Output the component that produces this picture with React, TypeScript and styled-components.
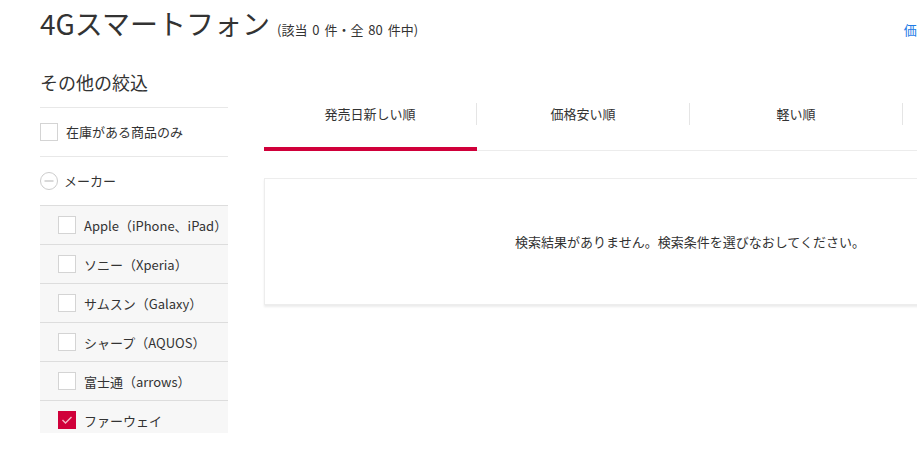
import styled, { createGlobalStyle } from "styled-components";

const GlobalStyle = createGlobalStyle`
  html, body {
    margin: 0;
    padding: 0;
    background: #fff;
    overflow: hidden;
  }
  body {
    font-family: "Noto Sans CJK JP", "Noto Sans", sans-serif;
    color: #333;
  }
`;

const makers = [
  { label: "Apple（iPhone、iPad）", checked: false },
  { label: "ソニー（Xperia）", checked: false },
  { label: "サムスン（Galaxy）", checked: false },
  { label: "シャープ（AQUOS）", checked: false },
  { label: "富士通（arrows）", checked: false },
  { label: "ファーウェイ", checked: true },
  { label: "LG", checked: false },
];

const tabs = ["発売日新しい順", "価格安い順", "軽い順", "人気順"];

const MinusCircle = () => (
  <svg width="18" height="18" viewBox="0 0 18 18">
    <circle cx="9" cy="9" r="8.5" fill="#fff" stroke="#ccc" />
    <line x1="4.5" y1="9" x2="13.5" y2="9" stroke="#ccc" strokeWidth="1.5" />
  </svg>
);

const App: React.FC = () => {
  return (
    <>
      <GlobalStyle />
      <Page>
        <Header>
          <TitleGroup>
            <Title>4Gスマートフォン</Title>
            <Count>(該当 0 件・全 80 件中)</Count>
          </TitleGroup>
          <HeaderLink>価格・お支払い方法についてはこちら</HeaderLink>
        </Header>
        <Columns>
          <Sidebar>
            <SideHeading>その他の絞込</SideHeading>
            <FilterRow>
              <Box />
              <span>在庫がある商品のみ</span>
            </FilterRow>
            <FilterRow>
              <MinusCircle />
              <MakerLabel>メーカー</MakerLabel>
            </FilterRow>
            <MakerList>
              {makers.map((m) => (
                <MakerRow key={m.label}>
                  <Box checked={m.checked}>
                    {m.checked && (
                      <svg width="12" height="10" viewBox="0 0 12 10">
                        <polyline
                          points="1.5,5 4.5,8 10.5,2"
                          fill="none"
                          stroke="#f4b7c6"
                          strokeWidth="1.4"
                        />
                      </svg>
                    )}
                  </Box>
                  <span>{m.label}</span>
                </MakerRow>
              ))}
            </MakerList>
          </Sidebar>
          <Main>
            <TabBar>
              {tabs.map((t, i) => (
                <Tab key={t} active={i === 0}>
                  <TabLabel last={i === tabs.length - 1}>{t}</TabLabel>
                </Tab>
              ))}
            </TabBar>
            <EmptyBox>検索結果がありません。検索条件を選びなおしてください。</EmptyBox>
          </Main>
        </Columns>
      </Page>
    </>
  );
};

export default App;

const Page = styled.div`
  width: 1076px;
  padding-left: 40px;
`;

const Header = styled.div`
  display: flex;
  justify-content: space-between;
  align-items: baseline;
  height: 64px;
  margin-right: -8px;
`;

const TitleGroup = styled.div`
  display: flex;
  align-items: baseline;
  gap: 7px;
  padding-top: 3px;
`;

const Title = styled.h1`
  margin: 0;
  font-size: 28px;
  font-weight: 400;
  line-height: 40px;
  color: #333;
`;

const Count = styled.span`
  font-size: 13px;
  word-spacing: 2px;
  color: #333;
`;

const HeaderLink = styled.a`
  font-size: 13px;
  color: #1e7be6;
  cursor: pointer;
`;

const Columns = styled.div`
  display: flex;
  gap: 36px;
`;

const Sidebar = styled.div`
  width: 188px;
  flex-shrink: 0;
`;

const SideHeading = styled.div`
  font-size: 18px;
  line-height: 24px;
  padding: 6px 0 13px;
  border-bottom: 1px solid #e8e8e8;
`;

const FilterRow = styled.div`
  display: flex;
  align-items: center;
  gap: 8px;
  padding: 15px 0;
  font-size: 13px;
  line-height: 18px;
  border-bottom: 1px solid #e8e8e8;

  &:nth-of-type(3) {
    border-bottom: 1px solid #ddd;
  }
`;

const MakerLabel = styled.span`
  margin-left: -2px;
`;

const MakerList = styled.div`
  height: 227px;
  overflow: hidden;
  background: #f7f7f7;
`;

const MakerRow = styled.div`
  display: flex;
  align-items: center;
  gap: 8px;
  height: 38px;
  padding-left: 18px;
  font-size: 13px;
  border-bottom: 1px solid #ddd;
`;

const Box = styled.span<{ checked?: boolean }>`
  display: inline-flex;
  align-items: center;
  justify-content: center;
  box-sizing: border-box;
  width: 18px;
  height: 18px;
  flex-shrink: 0;
  background: ${(p) => (p.checked ? "#d0003a" : "#fff")};
  border: 1px solid ${(p) => (p.checked ? "#d0003a" : "#d4d4d4")};
`;

const Main = styled.div`
  width: 852px;
  flex-shrink: 0;
`;

const TabBar = styled.div`
  display: flex;
  border-bottom: 1px solid #ececec;
`;

const Tab = styled.div<{ active?: boolean }>`
  flex: 1;
  padding: 39px 0 22px;
  border-bottom: 4px solid ${(p) => (p.active ? "#d0003a" : "transparent")};
  margin-bottom: -1px;
  font-size: 13px;
  cursor: pointer;
`;

const TabLabel = styled.div<{ last?: boolean }>`
  height: 22px;
  line-height: 22px;
  text-align: center;
  border-right: ${(p) => (p.last ? "none" : "1px solid #e5e5e5")};
`;

const EmptyBox = styled.div`
  margin-top: 27px;
  height: 125px;
  display: flex;
  align-items: center;
  justify-content: center;
  font-size: 13px;
  border: 1px solid #ededed;
  box-shadow: 0 2px 2px rgba(0, 0, 0, 0.08);
`;
